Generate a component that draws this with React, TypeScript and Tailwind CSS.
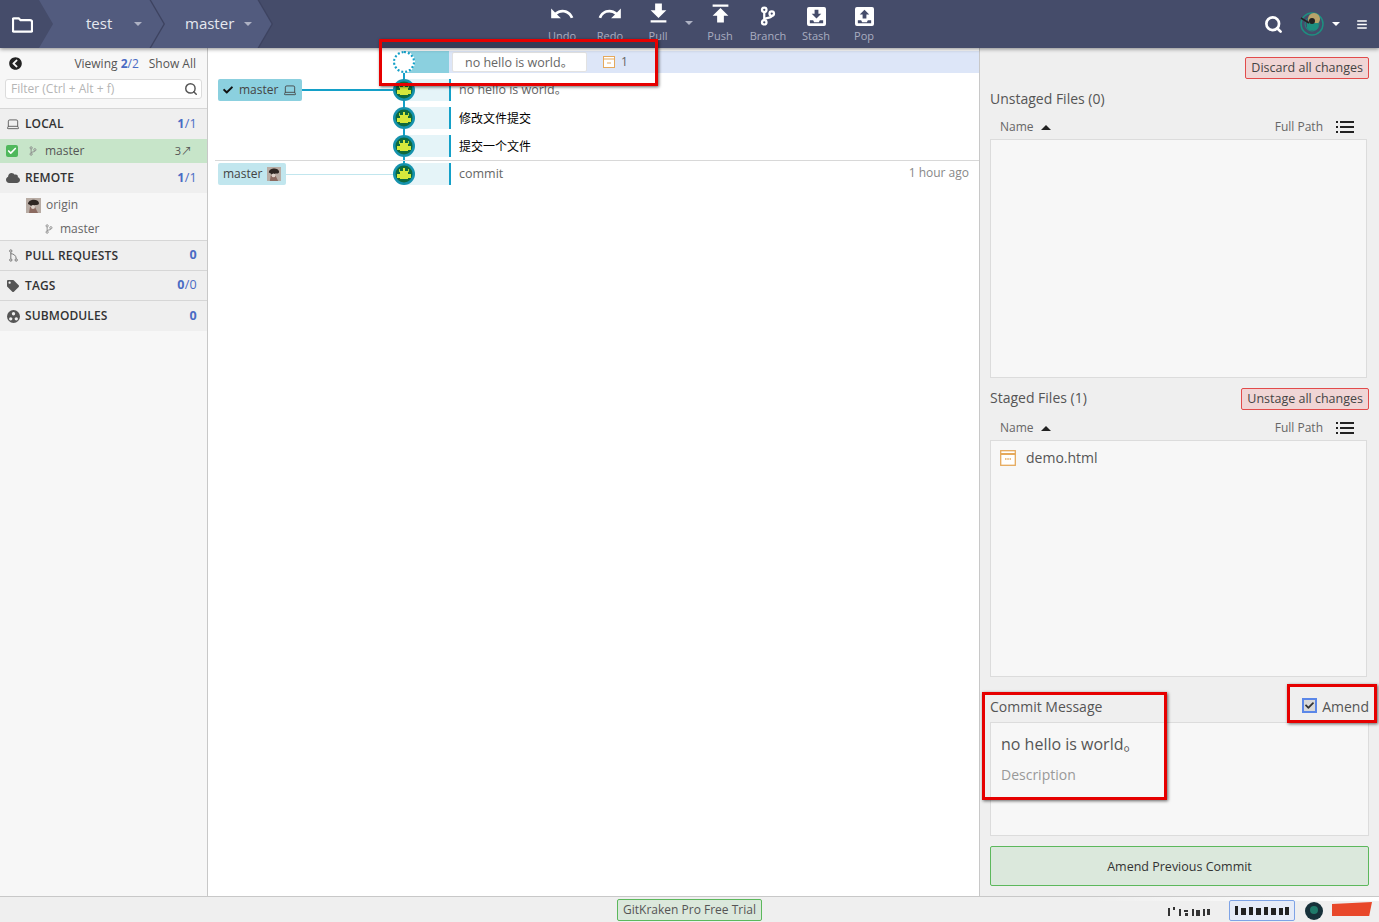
import { Check, Laptop, Search } from "lucide-react";
import { FaBars, FaCheck, FaChevronCircleLeft, FaCloud, FaTag } from "react-icons/fa";
import { MdFileDownload, MdPublish, MdRedo, MdUndo } from "react-icons/md";

function Caret({ className }: { className: string }) {
  return <span className={`inline-block h-0 w-0 border-x-[4px] border-t-[4px] border-x-transparent ${className}`} />;
}

function BranchIcon({ className, width = 1.4 }: { className: string; width?: number }) {
  return (
    <svg viewBox="0 0 12 16" className={className} fill="none" stroke="currentColor" strokeWidth={width}>
      <circle cx="3" cy="3" r="1.8" />
      <circle cx="3" cy="13" r="1.8" />
      <circle cx="9" cy="6" r="1.8" />
      <path d="M3 5v6M9 8c0 2-6 1-6 3" />
    </svg>
  );
}

function BoxIcon({ up }: { up?: boolean }) {
  return (
    <svg viewBox="0 0 20 20" className="mb-[1px] h-[19px] w-[19px]">
      <path fill="#fff" d="M2 0h16a2 2 0 0 1 2 2v16a2 2 0 0 1-2 2H2a2 2 0 0 1-2-2V2a2 2 0 0 1 2-2z" />
      <path fill="#454c6a" d="M3 14h3.500l1 2h5l1-2H17v3H3z" />
      {up ? (
        <path fill="#454c6a" d="M10 3l5 5h-3v4H8V8H5z" />
      ) : (
        <path fill="#454c6a" d="M8 3h4v4h3l-5 5-5-5h3z" />
      )}
    </svg>
  );
}

function ToolButton({ label, icon }: { label: string; icon: React.ReactNode }) {
  return (
    <div className="flex w-12 flex-col items-center">
      <div className="flex h-[27px] items-end justify-center text-white">{icon}</div>
      <span className="text-[11px] leading-[18px] text-[#a9adc0]">{label}</span>
    </div>
  );
}

function Crumb({ label, width, labelLeft, caretGap, z }: { label: string; width: string; labelLeft: string; caretGap: string; z: string }) {
  return (
    <div className={`-ml-[14px] h-12 bg-[#3d4360] [clip-path:polygon(0_0,calc(100%-14px)_0,100%_50%,calc(100%-14px)_100%,0_100%)] ${width} ${z}`}>
      <div className={`flex h-12 w-full items-center bg-[#525b7e] pb-[2px] text-[15px] text-[#e6e8ef] [clip-path:polygon(0_0,calc(100%-15.500px)_0,calc(100%-1.500px)_50%,calc(100%-15.500px)_100%,0_100%)] ${labelLeft}`}>
        <span>{label}</span>
        <Caret className={`mt-[2px] border-t-[#aeb2c4] ${caretGap}`} />
      </div>
    </div>
  );
}

function Header() {
  return (
    <header className="relative z-10 flex h-12 shrink-0 items-center bg-[#454c6a] shadow-[0_1px_4px_rgba(0,0,0,0.45)]">
      <div className="relative z-30 flex h-12 w-[53px] items-center bg-[#454c6a] pl-3 [clip-path:polygon(0_0,39px_0,53px_50%,39px_100%,0_100%)]">
        <svg viewBox="0 0 22 17" className="h-[17px] w-[21px]" fill="none" stroke="#fff" strokeWidth="2.4">
          <path d="M1 15V3a1 1 0 0 1 1-1h5l2 2h10a2 2 0 0 1 2 2v9a1 1 0 0 1-1 1H2a1 1 0 0 1-1-1z" />
        </svg>
      </div>
      <Crumb label="test" width="w-[126px]" labelLeft="pl-[47px]" caretGap="ml-[22px]" z="relative z-20" />
      <Crumb label="master" width="w-[122px]" labelLeft="pl-[34px]" caretGap="ml-[10px]" z="relative z-10" />
      <div className="ml-[265px] flex h-12">
        <ToolButton label="Undo" icon={<MdUndo className="h-[26px] w-[26px]" />} />
        <ToolButton label="Redo" icon={<MdRedo className="h-[26px] w-[26px]" />} />
        <ToolButton label="Pull" icon={<MdFileDownload className="h-[27px] w-[27px]" />} />
        <div className="flex w-[14px] items-center justify-center pb-[2px]">
          <Caret className="border-t-[#aeb2c4]" />
        </div>
        <ToolButton label="Push" icon={<MdPublish className="h-[27px] w-[27px]" />} />
        <ToolButton label="Branch" icon={<BranchIcon className="mb-[1px] h-[20px] w-[16px]" width={1.8} />} />
        <ToolButton label="Stash" icon={<BoxIcon />} />
        <ToolButton label="Pop" icon={<BoxIcon up />} />
      </div>
      <div className="ml-auto flex items-center pr-3">
        <Search className="h-[19px] w-[19px] text-white" strokeWidth={3.4} />
        <svg viewBox="0 0 24 24" className="ml-[17px] h-[24px] w-[24px]">
          <circle cx="12" cy="12" r="11" fill="none" stroke="#1d8f80" strokeWidth="1.500" />
          <circle cx="12" cy="12" r="7" fill="none" stroke="#1d8f80" strokeWidth="1" />
          <circle cx="14" cy="7" r="6" fill="#b7a36a" />
          <path d="M7 11h11v5l-2 2H9l-2-2z" fill="#1d8f80" />
          <path d="M1 6l8 5" stroke="#222" strokeWidth="1.500" />
          <circle cx="12" cy="9" r="3" fill="#222" />
        </svg>
        <Caret className="ml-[8px] border-t-white" />
        <FaBars className="ml-[17px] h-[11px] w-[10px] text-white" />
      </div>
    </header>
  );
}

function Count({ a, b }: { a: string; b?: string }) {
  return (
    <span className="ml-auto text-[12.500px] tracking-[0.3px] text-[#4a6bc4]">
      <span className="font-bold">{a}</span>
      {b && `/${b}`}
    </span>
  );
}

function Section({ icon, label, count, border }: { icon: React.ReactNode; label: string; count: React.ReactNode; border?: boolean }) {
  return (
    <div className={`flex h-[30px] items-center bg-[#efefef] pr-[10px] ${border ? "border-b border-[#d6d6d6]" : ""}`}>
      <span className="flex w-[25px] shrink-0 justify-center pl-[1px] text-[#555]">{icon}</span>
      <span className="text-[12px] font-semibold tracking-[0.1px] text-[#333]">{label}</span>
      {count}
    </div>
  );
}

function Sidebar() {
  return (
    <aside className="flex w-[208px] shrink-0 flex-col border-r border-[#c8c8c8] bg-[#f7f7f7]">
      <div className="flex h-[31px] items-center pl-[9px] pr-[11px] text-[12px] text-[#555]">
        <FaChevronCircleLeft className="h-[13px] w-[13px] text-[#222]" />
        <span className="ml-auto">
          Viewing <span className="font-bold text-[#4a6bc4]">2</span>
          <span className="text-[#4a6bc4]">/2</span>
        </span>
        <span className="ml-[10px]">Show All</span>
      </div>
      <div className="mx-[5px] flex h-5 items-center rounded-[3px] border border-[#dcdcdc] bg-white pl-[5px] pr-[3px]">
        <span className="text-[12px] text-[#b5b5b5]">Filter (Ctrl + Alt + f)</span>
        <Search className="ml-auto h-[14px] w-[14px] text-[#555]" strokeWidth={2.5} />
      </div>
      <div className="mt-[9px] border-t border-[#d6d6d6]" />
      <Section icon={<Laptop className="h-[14px] w-[14px]" strokeWidth={1.5} />} label="LOCAL" count={<Count a="1" b="1" />} />
      <div className="flex h-6 items-center bg-[#c7e5c9] pl-[6px] pr-[15px] text-[12px] text-[#555]">
        <span className="flex h-3 w-3 items-center justify-center rounded-[2px] bg-[#4fb85b]">
          <Check className="h-[10px] w-[10px] text-white" strokeWidth={4} />
        </span>
        <BranchIcon className="ml-[11px] h-[10px] w-[8px] text-[#888]" />
        <span className="ml-[8px]">master</span>
        <span className="ml-auto text-[11px]">3↗</span>
      </div>
      <Section icon={<FaCloud className="h-[14px] w-[14px]" />} label="REMOTE" count={<Count a="1" b="1" />} />
      <div className="flex h-[24px] items-center pl-[26px] text-[12px] text-[#666]">
        <Avatar className="h-[15px] w-[15px]" />
        <span className="ml-[5px]">origin</span>
      </div>
      <div className="flex h-[24px] items-center border-b border-[#d6d6d6] pl-[45px] text-[12px] text-[#666]">
        <BranchIcon className="h-[10px] w-[8px] text-[#888]" />
        <span className="ml-[7px]">master</span>
      </div>
      <Section
        border
        icon={
          <svg viewBox="0 0 10 14" className="h-[13px] w-[9px]" fill="none" stroke="#777" strokeWidth="1.100">
            <circle cx="2" cy="2" r="1.300" />
            <circle cx="2" cy="12" r="1.300" />
            <circle cx="8" cy="12" r="1.300" />
            <path d="M2 3.500v7M2 5c3 0 6 2 6 5.500" />
          </svg>
        }
        label="PULL REQUESTS"
        count={<Count a="0" />}
      />
      <Section border icon={<FaTag className="h-3 w-3" />} label="TAGS" count={<Count a="0" b="0" />} />
      <Section
        icon={
          <svg viewBox="0 0 14 14" className="h-[13px] w-[13px]">
            <circle cx="7" cy="7" r="7" fill="#555" />
            <circle cx="7" cy="4" r="1.800" fill="#efefef" />
            <circle cx="4" cy="9.500" r="1.800" fill="#efefef" />
            <circle cx="10" cy="9.500" r="1.800" fill="#efefef" />
          </svg>
        }
        label="SUBMODULES"
        count={<Count a="0" />}
      />
    </aside>
  );
}

function Avatar({ className }: { className: string }) {
  return (
    <svg viewBox="0 0 15 15" className={className}>
      <rect width="15" height="15" fill="#b8aca4" />
      <path d="M2 6c0-5 10-6 11-1 0 2-2 2-4 2L6 9 4 7z" fill="#2e2622" />
      <path d="M4 9h5l3 6H3z" fill="#8b6a60" />
      <circle cx="7" cy="9" r="2" fill="#ddd0c8" />
    </svg>
  );
}

function KrakenNode() {
  return (
    <svg viewBox="0 0 22 22" className="absolute left-[185px] top-[3px] h-[22px] w-[22px]">
      <circle cx="11" cy="11" r="11" fill="#1592ad" />
      <circle cx="11" cy="11" r="8.500" fill="#0e6a3d" />
      <path d="M10 5h2v3h3v3h3v4h-3v1H7v-1H4v-4h3V8h3z" fill="#d5e83c" />
      <path d="M6 6h1v3H6zM15 6h1v3h-1z" fill="#a8d838" />
    </svg>
  );
}

function RefTag({ active, children }: { active?: boolean; children: React.ReactNode }) {
  return (
    <div className={`flex h-[22px] shrink-0 items-center rounded-[2px] px-[5px] text-[12px] text-[#444] ${active ? "bg-[#8bd0df]" : "bg-[#c1e6ee]"}`}>
      {children}
    </div>
  );
}

function CommitRow({ message, cjk, tag, time }: { message: string; cjk?: boolean; tag?: React.ReactNode; time?: string }) {
  return (
    <div className="relative flex h-7 items-center">
      <div className="flex w-[196px] shrink-0 items-center pl-[10px]">{tag}</div>
      <div className="h-[22px] w-[45px] shrink-0 bg-[#e5f4f8]" />
      <div className="h-[22px] w-[2px] shrink-0 bg-[#14a0c8]" />
      <span className={`ml-2 mt-[1px] ${cjk ? "text-[12px] text-black" : "text-[12.500px] text-[#666]"}`}>{message}</span>
      {time && <span className="ml-auto mt-[-2px] pr-[10px] text-[12px] text-[#888]">{time}</span>}
      <KrakenNode />
    </div>
  );
}

function Graph() {
  return (
    <main className="relative flex min-w-0 flex-1 flex-col bg-white">
      <div className="absolute left-[195px] top-[20px] h-[106px] w-[2px] bg-[#14a0c8]" />
      <div className="relative flex h-7 items-center">
        <div className="w-[196px] shrink-0" />
        <div className="flex h-[22px] min-w-0 flex-1 items-center bg-[#dde6f8]">
          <div className="h-[22px] w-[45px] shrink-0 bg-[#8bd0df]" />
          <div className="ml-[3px] flex h-5 w-[135px] items-center rounded-[2px] border border-[#e2e2e2] bg-white pl-3 pt-[2px] text-[12.500px] text-[#666]">
            no hello is world。
          </div>
          <svg viewBox="0 0 12 12" className="ml-[16px] h-3 w-3" fill="#fff" stroke="#e5a95c" strokeWidth="1">
            <rect x="0.500" y="0.500" width="11" height="11" />
            <path d="M0.500 3h11M4 7h4" />
          </svg>
          <span className="ml-[6px] text-[12px] text-[#666]">1</span>
        </div>
        <div className="absolute left-[185px] top-[3px] h-[22px] w-[22px] rounded-full border-2 border-dotted border-[#14a0c8] bg-white" />
      </div>
      <CommitRow
        message="no hello is world。"
        tag={
          <>
            <RefTag active>
              <FaCheck className="h-[10px] w-[10px] text-[#111]" />
              <span className="ml-[6px]">master</span>
              <Laptop className="ml-[5px] h-[14px] w-[14px]" strokeWidth={1.5} />
            </RefTag>
            <div className="h-[2px] flex-1 bg-[#14a0c8]" />
          </>
        }
      />
      <CommitRow message="修改文件提交" cjk />
      <CommitRow message="提交一个文件" cjk />
      <div className="relative">
        <div className="absolute left-[7px] right-0 top-0 border-t border-[#d8d8d8]" />
        <CommitRow
          message="commit"
          time="1 hour ago"
          tag={
            <>
              <RefTag>
                <span>master</span>
                <Avatar className="ml-[5px] h-[14px] w-[14px]" />
              </RefTag>
              <div className="h-px flex-1 bg-[#c1e6ee]" />
            </>
          }
        />
      </div>
    </main>
  );
}

function ListIcon() {
  return (
    <svg viewBox="0 0 18 12" className="ml-[13px] h-[12px] w-[18px]" fill="#222">
      <path d="M0 0h2v2H0zM0 5h2v2H0zM0 10h2v2H0zM4 0h14v2H4zM4 5h14v2H4zM4 10h14v2H4z" />
    </svg>
  );
}

function ColumnHead() {
  return (
    <div className="flex h-[24px] items-center pl-[10px] pr-[15px] text-[12px] text-[#666]">
      <span>Name</span>
      <span className="ml-[7px] h-0 w-0 border-x-[5px] border-b-[5px] border-x-transparent border-b-[#222]" />
      <span className="ml-auto">Full Path</span>
      <ListIcon />
    </div>
  );
}

function DangerButton({ label }: { label: string }) {
  return (
    <button className="h-[22px] rounded-[2px] border border-[#e24b4b] bg-[#f0d5d5] px-[5px] text-[12.500px] text-[#444]">
      {label}
    </button>
  );
}

function RightPanel() {
  return (
    <aside className="flex w-[399px] shrink-0 flex-col bg-[#efefef] pl-[10px] pr-[10px]">
      <div className="flex h-[31px] items-end justify-end">
        <DangerButton label="Discard all changes" />
      </div>
      <div className="mt-[10px] text-[14px] leading-[20px] text-[#555]">Unstaged Files (0)</div>
      <div className="mt-[6px]">
        <ColumnHead />
      </div>
      <div className="mr-[2px] h-[239px] border border-[#dcdcdc] bg-[#f7f7f7]" />
      <div className="mt-[10px] flex h-[22px] items-center justify-between">
        <span className="mt-[-4px] text-[14px] text-[#555]">Staged Files (1)</span>
        <DangerButton label="Unstage all changes" />
      </div>
      <div className="mt-[6px]">
        <ColumnHead />
      </div>
      <div className="mr-[2px] h-[237px] border border-[#dcdcdc] bg-[#f7f7f7] pl-[9px] pt-[6px]">
        <div className="flex items-center text-[14px] text-[#555]">
          <svg viewBox="0 0 16 16" className="h-4 w-4" fill="#fff" stroke="#e5a95c" strokeWidth="1.300">
            <rect x="0.700" y="0.700" width="14.600" height="14.600" />
            <path d="M0.700 4h14.600" strokeWidth="2" />
            <path d="M5 9h6" strokeDasharray="1.500 0.800" strokeWidth="1.500" />
          </svg>
          <span className="ml-[10px]">demo.html</span>
        </div>
      </div>
      <div className="flex h-[45px] items-end justify-between pb-[5px] text-[14px] leading-[20px] text-[#555]">
        <span>Commit Message</span>
        <span className="flex items-end">
          <span className="mb-[4px] flex h-[15px] w-[15px] items-center justify-center border-2 border-[#5b87e8] bg-[#d8d8d8]">
            <FaCheck className="h-[9px] w-[9px] text-[#333]" />
          </span>
          <span className="ml-[5px]">Amend</span>
        </span>
      </div>
      <div className="h-[114px] border border-[#dcdcdc] bg-[#f7f7f7] pl-[10px] pt-[10px]">
        <div className="text-[16px] leading-[22px] text-[#555]">no hello is world。</div>
        <div className="mt-[10px] text-[14px] leading-[20px] text-[#999]">Description</div>
      </div>
      <button className="mt-[10px] h-10 rounded-[2px] border border-[#5cb85c] bg-[#dbe8dc] pt-[2px] text-[12.500px] text-[#333]">
        Amend Previous Commit
      </button>
    </aside>
  );
}

function Footer() {
  return (
    <footer className="relative flex h-[26px] shrink-0 items-center justify-center border-t border-[#c8c8c8] bg-[#efefef]">
      <span className="rounded-[2px] border border-[#5cb85c] bg-[#dbe8dc] px-[5px] text-[12px] leading-[20px] text-[#555]">
        GitKraken Pro Free Trial
      </span>
      <div className="absolute right-0 top-0 h-1 w-[290px] bg-linear-to-r from-transparent to-white" />
      <div className="absolute right-[7px] top-[3px] flex items-center blur-[0.6px]">
        <svg viewBox="0 0 42 10" className="h-[10px] w-[42px]" fill="#333">
          <path d="M0 2h2v8H0zM5 1h2v3H5zM11 3h2v7h-2zM16 4h4v2h-4zM17 7h3v3h-3zM24 3h2v7h-2zM28 4h4v6h-4zM35 3h2v7h-2zM39 3h3v6h-3z" />
        </svg>
        <div className="ml-[19px] flex h-[21px] w-[66px] items-center justify-center rounded-[2px] border border-[#7ea3e6] bg-[#e6ecf8]">
          <svg viewBox="0 0 54 9" className="h-[9px] w-[54px]" fill="#222">
            <path d="M0 0h3v9H0zM6 2h5v7H6zM14 1h4v8h-4zM21 2h5v7h-5zM29 1h4v8h-4zM36 2h5v7h-5zM44 2h4v7h-4zM50 1h4v8h-4z" />
          </svg>
        </div>
        <svg viewBox="0 0 18 18" className="ml-[10px] h-[18px] w-[18px]">
          <circle cx="9" cy="9" r="9" fill="#17313a" />
          <circle cx="9" cy="8" r="4" fill="#1f7a6a" />
        </svg>
        <div className="mb-[3px] ml-[9px] h-[14px] w-[40px] bg-[#e8482a] [clip-path:polygon(0_15%,100%_0,93%_100%,0_100%)]" />
      </div>
    </footer>
  );
}

function Annotations() {
  return (
    <div className="absolute inset-0 z-20 pointer-events-none">
      <div className="absolute left-[381px] top-[41px] h-[7px] w-[274px] bg-[#363b56]" />
      <div className="absolute left-[379px] top-[39px] h-[47px] w-[279px] border-[3px] border-[#e60000] shadow-[1px_1px_3px_rgba(0,0,0,0.6)]" />
      <div className="absolute left-[982px] top-[692px] h-[108px] w-[185px] border-[3px] border-[#e60000] shadow-[1px_1px_3px_rgba(0,0,0,0.6)]" />
      <div className="absolute left-[1287px] top-[684px] h-[39px] w-[90px] border-[3px] border-[#e60000] shadow-[1px_1px_3px_rgba(0,0,0,0.6)]" />
    </div>
  );
}

export default function App() {
  return (
    <div className="relative flex h-screen w-full flex-col overflow-hidden font-['Open_Sans','Noto_Sans_CJK_SC',sans-serif]">
      <Header />
      <div className="flex min-h-0 flex-1">
        <Sidebar />
        <Graph />
        <div className="w-px shrink-0 bg-[#c8c8c8]" />
        <RightPanel />
      </div>
      <Footer />
      <Annotations />
    </div>
  );
}
